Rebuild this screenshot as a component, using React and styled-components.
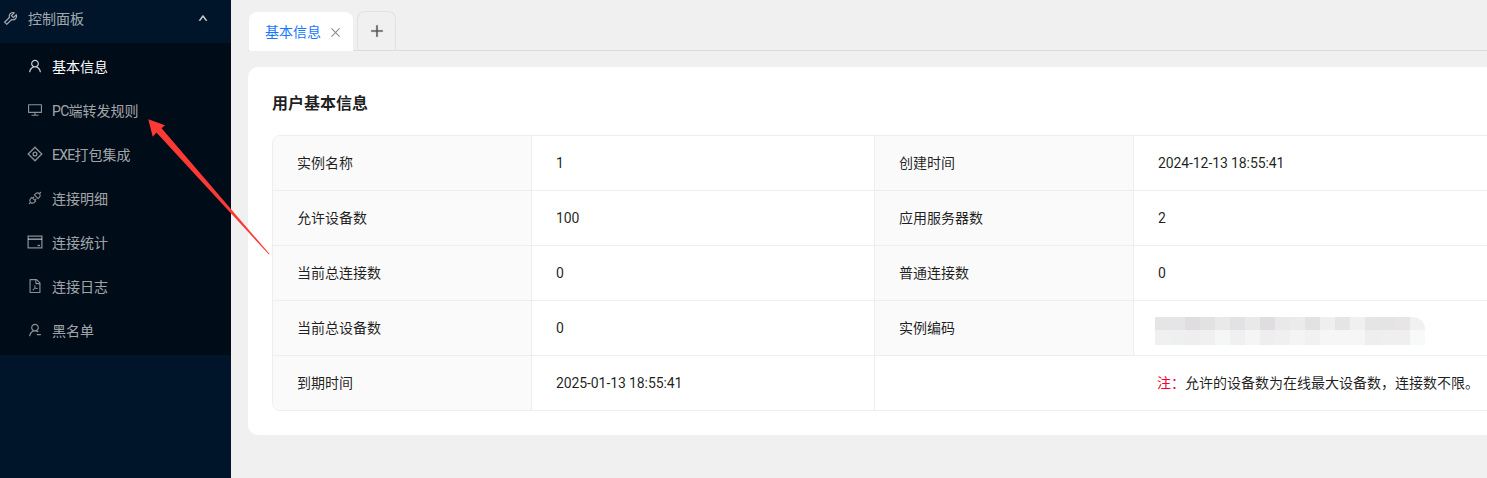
import React from 'react';
import styled, { createGlobalStyle } from 'styled-components';
import {
  AiOutlineTool, AiOutlineUp, AiOutlineUser, AiOutlineDesktop, AiOutlineApi,
  AiOutlineFilePdf, AiOutlineUserDelete, AiOutlineClose, AiOutlinePlus,
} from 'react-icons/ai';

const Global = createGlobalStyle`
  html, body { margin: 0; padding: 0; height: 478px; overflow: hidden; background: #f0f0f0; }
  body { font-family: Roboto, "Noto Sans CJK SC", "Noto Sans", sans-serif; font-size: 14px; color: rgba(0,0,0,.88); }
  * { box-sizing: border-box; }
`;

const Page = styled.div`display: flex; width: 1487px; height: 478px; overflow: hidden; position: relative;`;
const Sider = styled.aside`width: 231px; flex: none; background: #001529; color: rgba(255,255,255,.65);`;
const MenuHeader = styled.div`
  height: 43px; padding: 0 22px 7px 2px; display: flex; align-items: center; gap: 9px;
  svg { font-size: 17px; }
`;
const Grow = styled.span`flex: 1;`;
const Chevron = styled(AiOutlineUp)`
  && { font-size: 10px; } color: #d0d3d6; stroke: currentColor; stroke-width: 90; margin-right: 1px;
`;
const SubMenu = styled.div`background: #000c17; height: 312px; padding-top: 2px;`;
const Item = styled.div`
  height: 44px; padding: 0 0 2px 27px; display: flex; align-items: center; gap: 9px;
  color: ${p => (p.$active ? '#fff' : 'rgba(255,255,255,.65)')};
  svg { width: 16px; height: 16px; flex: none; color: ${p => (p.$active ? 'rgba(255,255,255,.8)' : 'rgba(255,255,255,.55)')}; }
`;
const ItemText = styled.span`white-space: nowrap;`;
const Latin = styled.span`letter-spacing: -.7px;`;
const Main = styled.main`flex: none; width: 1300px; padding-left: 17px;`;
const TabBar = styled.div`height: 51px; display: flex; align-items: flex-end; gap: 4px; border-bottom: 1px solid #dcdcdc; padding-left: 1px;`;
const Tab = styled.div`
  width: 104px; height: 39px; margin-bottom: -1px; padding: 0 0 1px 16px; background: #fff; border-radius: 8px 8px 0 0; color: #1677ff;
  display: flex; align-items: center; gap: 8px;
  svg { color: #8c8c8c; font-size: 13px; margin-top: 2px; }
`;
const AddTab = styled.div`
  width: 39px; height: 39px; border: 1px solid #e2e2e2; border-bottom: 0; border-radius: 8px 8px 0 0;
  display: flex; align-items: center; justify-content: center; color: #555; font-size: 16px;
  svg { stroke: currentColor; stroke-width: 30; }
`;
const Card = styled.section`margin-top: 16px; height: 368px; background: #fff; border-radius: 10px; padding: 24px;`;
const Title = styled.h2`margin: 0 0 19px; height: 25px; line-height: 25px; font-size: 16px; font-weight: 600;`;
const Table = styled.div`
  display: grid; grid-template-columns: 259px 343px 259px 1fr; grid-template-rows: repeat(4, 55px) 54px;
  border: 1px solid #eee; border-radius: 8px; overflow: hidden; color: rgba(0,0,0,.88);
`;
const Cell = styled.div`
  display: flex; align-items: center; padding: 0 0 ${p => (p.$num ? '0' : '2px')} 24px;
  border-right: 1px solid #eee; border-bottom: 1px solid #eee;
  font-size: 14px; letter-spacing: ${p => (p.$num ? '-.1px' : '0')};
  &:nth-last-child(-n+3) { border-bottom: 0; }
`;
const Label = styled(Cell)`background: #fafafa;`;
const Note = styled(Cell)`grid-column: span 2; padding-left: 282px; border-bottom: 0; white-space: nowrap;`;
const Red = styled.span`color: #f5002d;`;
const Mosaic = styled.div`
  display: grid; grid-template-columns: repeat(18, 15px); grid-template-rows: 13px 15px;
  margin: 8px 0 0 -3px; border-top-right-radius: 12px; overflow: hidden;
`;
const Pixel = styled.i`display: block; background: ${p => p.$c};`;
const Arrow = styled.svg`position: absolute; left: 0; top: 0; pointer-events: none;`;

const UIIcon = {
  Diamond: () => (
    <svg viewBox="0 0 16 16" fill="none" stroke="currentColor" strokeWidth="1.3">
      <path d="M8 1.2 14.8 8 8 14.8 1.2 8Z" /><circle cx="8" cy="8" r="1.9" />
    </svg>
  ),
  Card: () => (
    <svg viewBox="0 0 16 16" fill="none" stroke="currentColor" strokeWidth="1.2">
      <rect x="1.1" y="2.1" width="13.8" height="11.8" /><path d="M1 5.2h14" strokeWidth="1.6" /><path d="M10.5 11.5h2.5" strokeWidth="1.4" />
    </svg>
  ),
};

const menu = [
  [AiOutlineUser, '基本信息', true], [AiOutlineDesktop, <><Latin>PC</Latin>端转发规则</>], [UIIcon.Diamond, <><Latin>EXE</Latin>打包集成</>],
  [AiOutlineApi, '连接明细'], [UIIcon.Card, '连接统计'], [AiOutlineFilePdf, '连接日志'], [AiOutlineUserDelete, '黑名单'],
];
const top = ['#e6e5e5','#e5e5e7','#dfdde0','#e3e2e3','#e9e9e9','#e2e2e4','#e9e9e9','#dfdde0','#e9e8ea','#ebebeb','#e2e2e3','#efefef','#e5e5e5','#f0f0ef','#e5e5e5','#e4e4e4','#e8e5e6','#f1f1f1'];
const bottom = ['#f0f0f0','#eeefef','#eeeeee','#f0f0f0','#f5f6f6','#f0f0f0','#f5f5f5','#eeeeef','#f1f0f1','#f4f4f4','#f1f1f2','#f6f6f6','#f6f6f6','#f6f6f6','#eeeeee','#efefef','#f0eff0','#f8f9f9'];

export default function App() {
  return (
    <Page>
      <Global />
      <Sider>
        <MenuHeader><AiOutlineTool />控制面板<Grow /><Chevron /></MenuHeader>
        <SubMenu>
          {menu.map(([I, t, a], i) => <Item key={i} $active={a}><I /><ItemText>{t}</ItemText></Item>)}
        </SubMenu>
      </Sider>
      <Main>
        <TabBar>
          <Tab>基本信息<AiOutlineClose /></Tab>
          <AddTab><AiOutlinePlus /></AddTab>
        </TabBar>
        <Card>
          <Title>用户基本信息</Title>
          <Table>
            <Label>实例名称</Label><Cell $num>1</Cell><Label>创建时间</Label><Cell $num>2024-12-13 18:55:41</Cell>
            <Label>允许设备数</Label><Cell $num>100</Cell><Label>应用服务器数</Label><Cell $num>2</Cell>
            <Label>当前总连接数</Label><Cell $num>0</Cell><Label>普通连接数</Label><Cell $num>0</Cell>
            <Label>当前总设备数</Label><Cell $num>0</Cell><Label>实例编码</Label>
            <Cell><Mosaic>{[...top, ...bottom].map((c, i) => <Pixel key={i} $c={c} />)}</Mosaic></Cell>
            <Label>到期时间</Label><Cell $num>2025-01-13 18:55:41</Cell>
            <Note><Red>注：</Red>允许的设备数为在线最大设备数，连接数不限。</Note>
          </Table>
        </Card>
      </Main>
      <Arrow width="1487" height="478" viewBox="0 0 1487 478">
        <path d="M148.3 119.3 165 125.3 161.6 128.3 269.6 254 268.9 254.6 156.4 132.6 152.7 136.7Z" fill="#fb3a36" />
      </Arrow>
    </Page>
  );
}
